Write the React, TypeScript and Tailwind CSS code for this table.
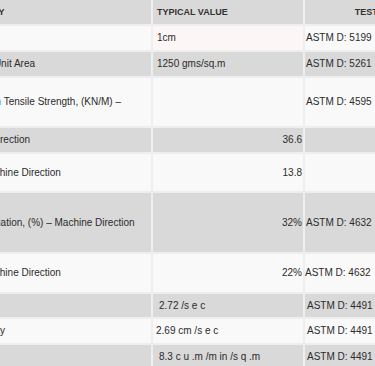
type Row = {
  property: string;
  value: string;
  method: string;
  h: string;
  alignRight?: boolean;
  valuePad?: string;
  methodPad?: string;
  propPad?: string;
};

const ROWS: Row[] = [
  { property: 'Thickness', value: '1cm', method: 'ASTM D: 5199', h: 'h-[24px]' },
  { property: 'Mass per Unit Area', value: '1250 gms/sq.m', method: 'ASTM D: 5261', h: 'h-[24px]' },
  { property: 'Wide Width Tensile Strength, (KN/M) –', value: '', method: 'ASTM D: 4595', h: 'h-[48px]' },
  { property: 'Machine Direction', value: '36.6', method: '', h: 'h-[24px]', alignRight: true },
  { property: 'Cross Machine Direction', value: '13.8', method: '', h: 'h-[37px]', alignRight: true, propPad: 'pl-[6px]' },
  { property: 'Grab Elongation, (%) – Machine Direction', value: '32%', method: 'ASTM D: 4632', h: 'h-[59px]', alignRight: true, methodPad: 'pl-[1px]' },
  { property: 'Cross Machine Direction', value: '22%', method: 'ASTM D: 4632', h: 'h-[38px]', alignRight: true, propPad: 'pl-[6px]', methodPad: 'pl-0' },
  { property: 'Permittivity', value: '2.72 /s e c', method: 'ASTM D: 4491', h: 'h-[23px]', valuePad: 'pl-[6px]', methodPad: 'pl-[2px]', propPad: 'pl-0' },
  { property: 'Permeability', value: '2.69 cm /s e c', method: 'ASTM D: 4491', h: 'h-[24px]', valuePad: 'pl-[3px]', methodPad: 'pl-[2px]' },
  { property: 'Flow Rate', value: '8.3 c u .m /m in /s q .m', method: 'ASTM D: 4491', h: 'h-[24px]', valuePad: 'pl-[6px]', methodPad: 'pl-[2px]' },
];

export default function App() {
  return (
    <div className="w-[375px] h-[366px] overflow-hidden bg-white font-['Liberation_Sans',Arial,sans-serif] text-[#2b2b2b]">
      <table className="-ml-[56px] -mt-[2px] w-[527px] table-fixed border-separate border-spacing-[2px] bg-[#eeeeee] text-[10px] leading-[12px]">
        <colgroup>
          <col className="w-[205px]" />
          <col className="w-[150px]" />
          <col className="w-[164px]" />
        </colgroup>
        <thead>
          <tr className="h-[24px] bg-[#d9d9d9] text-[9px] font-bold text-[#333333]">
            <th className="pl-[9px] text-left align-middle">PROPERTY</th>
            <th className="pl-[4px] text-left align-middle">TYPICAL VALUE</th>
            <th className="text-center align-middle">TEST METHOD</th>
          </tr>
        </thead>
        <tbody>
          {ROWS.map((row, i) => {
            const shade = i % 2 === 0 ? 'bg-[#f9f9f9]' : 'bg-[#d9d9d9]';
            return (
              <tr key={i} className={`${row.h} ${shade}`}>
                <td className={`${row.propPad ?? 'pl-[4px]'} whitespace-nowrap align-middle`}>
                  {row.property.startsWith('Wide Width') ? (
                    <>
                      <span className="text-[#3b9bd9]">Wide Width</span> Tensile Strength, (KN/M) –
                    </>
                  ) : (
                    row.property
                  )}
                </td>
                <td
                  className={`align-middle whitespace-nowrap ${
                    row.alignRight ? 'pr-[1px] text-right' : `${row.valuePad ?? 'pl-[4px]'} text-left`
                  } ${i === 0 ? 'bg-[#fcf7f6]' : ''}`}
                >
                  {row.value}
                </td>
                <td className={`${row.methodPad ?? 'pl-[1px]'} align-middle whitespace-nowrap text-left`}>
                  {row.method}
                </td>
              </tr>
            );
          })}
        </tbody>
      </table>
    </div>
  );
}
